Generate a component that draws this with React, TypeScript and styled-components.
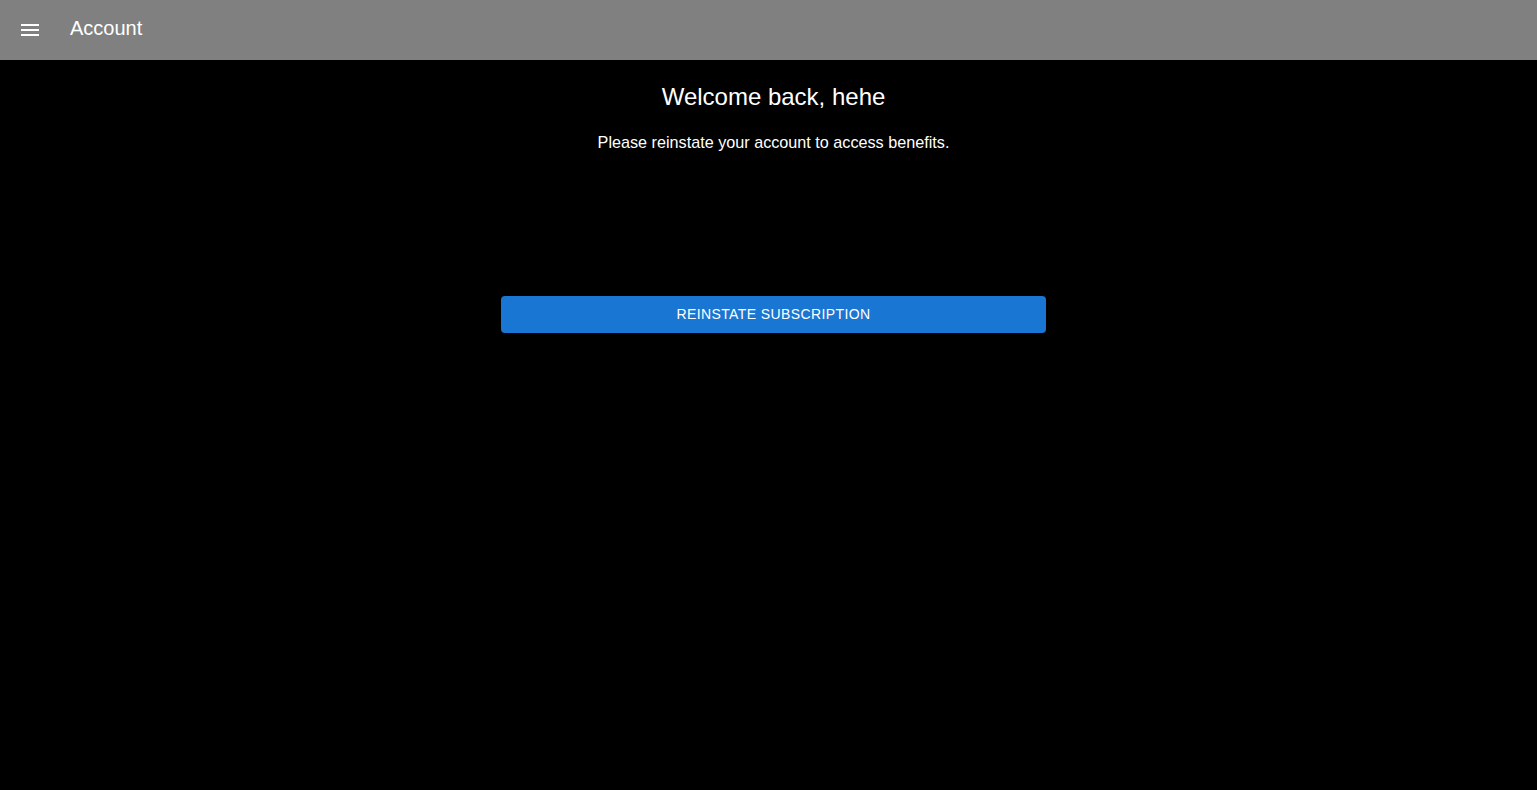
import React from "react";
import styled, { createGlobalStyle } from "styled-components";

const GlobalStyle = createGlobalStyle`
  html, body {
    margin: 0;
    padding: 0;
    background: #000;
    color: #fff;
    font-family: "Liberation Sans", Arial, sans-serif;
  }
  #root {
    min-height: 100vh;
    background: #000;
  }
`;

const TopBar = styled.header`
  height: 60px;
  background: #808080;
  display: flex;
  align-items: center;
  padding: 0 18px;
  box-sizing: border-box;
`;

const MenuButton = styled.button`
  width: 24px;
  height: 24px;
  padding: 0;
  margin: 0 28px 0 0;
  border: none;
  background: transparent;
  color: #fff;
  display: flex;
  align-items: center;
  justify-content: center;
  cursor: pointer;
`;

const BarTitle = styled.h1`
  margin: 0 0 4px;
  font-size: 20px;
  font-weight: 400;
  line-height: 1;
  color: #fff;
`;

const Main = styled.main`
  display: flex;
  flex-direction: column;
  align-items: center;
  padding: 19px 0 0 10px;
`;

const Heading = styled.h2`
  margin: 0;
  font-size: 24px;
  font-weight: 400;
  line-height: 36px;
  text-align: center;
`;

const Message = styled.p`
  margin: 15px 0 0;
  font-size: 16.2px;
  line-height: 24px;
  text-align: center;
`;

const ActionButton = styled.button`
  margin-top: 142px;
  width: 545px;
  height: 37px;
  padding: 0 0 2px;
  border: none;
  border-radius: 4px;
  background: #1976d2;
  color: #fff;
  font-family: "Liberation Sans", Arial, sans-serif;
  font-size: 14px;
  font-weight: 400;
  letter-spacing: 0.4px;
  text-transform: uppercase;
  cursor: pointer;
`;

const MenuIcon = () => (
  <svg width="24" height="24" viewBox="0 0 24 24" fill="currentColor">
    <path d="M3 18h18v-2H3v2zm0-5h18v-2H3v2zm0-7v2h18V6H3z" />
  </svg>
);

export default function App() {
  return (
    <>
      <GlobalStyle />
      <TopBar>
        <MenuButton aria-label="menu">
          <MenuIcon />
        </MenuButton>
        <BarTitle>Account</BarTitle>
      </TopBar>
      <Main>
        <Heading>Welcome back, hehe</Heading>
        <Message>Please reinstate your account to access benefits.</Message>
        <ActionButton>Reinstate subscription</ActionButton>
      </Main>
    </>
  );
}
